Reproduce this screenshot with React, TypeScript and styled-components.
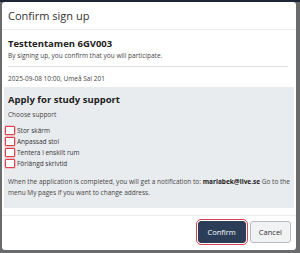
import React from "react";
import styled, { createGlobalStyle } from "styled-components";

const Global = createGlobalStyle`
  html, body { margin: 0; padding: 0; }
  body {
    width: 300px;
    height: 253px;
    overflow: hidden;
    background: #6a6b6d;
    font-family: "Open Sans", "Noto Sans", sans-serif;
  }
`;

const Backdrop = styled.div`
  width: 300px;
  height: 253px;
  box-sizing: border-box;
  padding: 2px 4px 3px 2px;
  background: linear-gradient(#1e2636 0 2px, #6a6b6d 2px);
`;

const Modal = styled.div`
  height: 248px;
  background: #fff;
  border-radius: 3px;
  display: flex;
  flex-direction: column;
  overflow: hidden;
`;

const Header = styled.div`
  height: 27px;
  display: flex;
  align-items: center;
  padding: 0 6px;
  border-bottom: 1px solid #ececec;
  font-size: 11px;
  color: #333;
`;

const Body = styled.div`
  flex: 1;
  padding: 0 2px;
  display: flex;
  flex-direction: column;
`;

const Intro = styled.div`
  padding: 7px 4px 0;
`;

const Title = styled.div`
  font-weight: 700;
  font-size: 9.5px;
  color: #222;
  line-height: 13px;
`;

const Small = styled.div<{ $mt?: number }>`
  font-size: 6.5px;
  color: #444;
  line-height: 11px;
  margin-top: ${(p) => p.$mt ?? 0}px;
`;

const Strong = styled.span`
  font-weight: 700;
  color: #222;
  line-height: 1;
`;

const Divider = styled.hr`
  border: 0;
  border-top: 1px solid #dedede;
  margin: 5px 2px 6px 0;
`;

const SupportBox = styled.div`
  margin-top: 3px;
  background: #e9ecef;
  padding: 6px 4px 6px;
  height: 121px;
  box-sizing: border-box;
`;

const OptionList = styled.div`
  display: flex;
  flex-direction: column;
  gap: 2px;
  margin: 6px 0 8px -3px;
`;

const Option = styled.label`
  display: flex;
  align-items: center;
  gap: 2px;
  font-size: 6.5px;
  color: #333;
  height: 9px;
`;

const Box = styled.span`
  width: 8px;
  height: 7px;
  background: #fff;
  border: 1px solid #d9434e;
  border-radius: 1px;
  box-shadow: 0 0 0 0.5px #f19aa0;
`;

const Footer = styled.div`
  margin-top: 7px;
  border-top: 1px solid #ececec;
  height: 32px;
  display: flex;
  justify-content: flex-end;
  align-items: center;
  gap: 4px;
  padding: 0 5px 2px;
`;

const Button = styled.button<{ $primary?: boolean }>`
  font-family: inherit;
  font-size: 7.5px;
  height: 22px;
  padding: 0 ${(p) => (p.$primary ? 9 : 8)}px;
  border-radius: 3px;
  cursor: pointer;
  color: ${(p) => (p.$primary ? "#fff" : "#333")};
  background: ${(p) => (p.$primary ? "#2b3d57" : "#f1f2f4")};
  border: 1px solid ${(p) => (p.$primary ? "#2b3d57" : "#b8bcc2")};
  outline: ${(p) => (p.$primary ? "1.5px solid #d9434e" : "none")};
  outline-offset: 1.5px;
`;

const options = ["Stor skärm", "Anpassad stol", "Tentera i enskilt rum", "Förlängd skrivtid"];

export default function App() {
  return (
    <>
      <Global />
      <Backdrop>
        <Modal>
          <Header>Confirm sign up</Header>
          <Body>
            <Intro>
              <Title>Testtentamen 6GV003</Title>
              <Small>By signing up, you confirm that you will participate.</Small>
              <Divider />
              <Small>2025-09-08 10:00, Umeå Sal 201</Small>
            </Intro>
            <SupportBox>
              <Title>Apply for study support</Title>
              <Small $mt={3}>Choose support</Small>
              <OptionList>
                {options.map((o) => (
                  <Option key={o}>
                    <Box />
                    {o}
                  </Option>
                ))}
              </OptionList>
              <Small>
                When the application is completed, you will get a notification to:{" "}
                <Strong>mariabek@live.se</Strong> Go to the menu My pages if you want to change address.
              </Small>
            </SupportBox>
          </Body>
          <Footer>
            <Button $primary>Confirm</Button>
            <Button>Cancel</Button>
          </Footer>
        </Modal>
      </Backdrop>
    </>
  );
}
